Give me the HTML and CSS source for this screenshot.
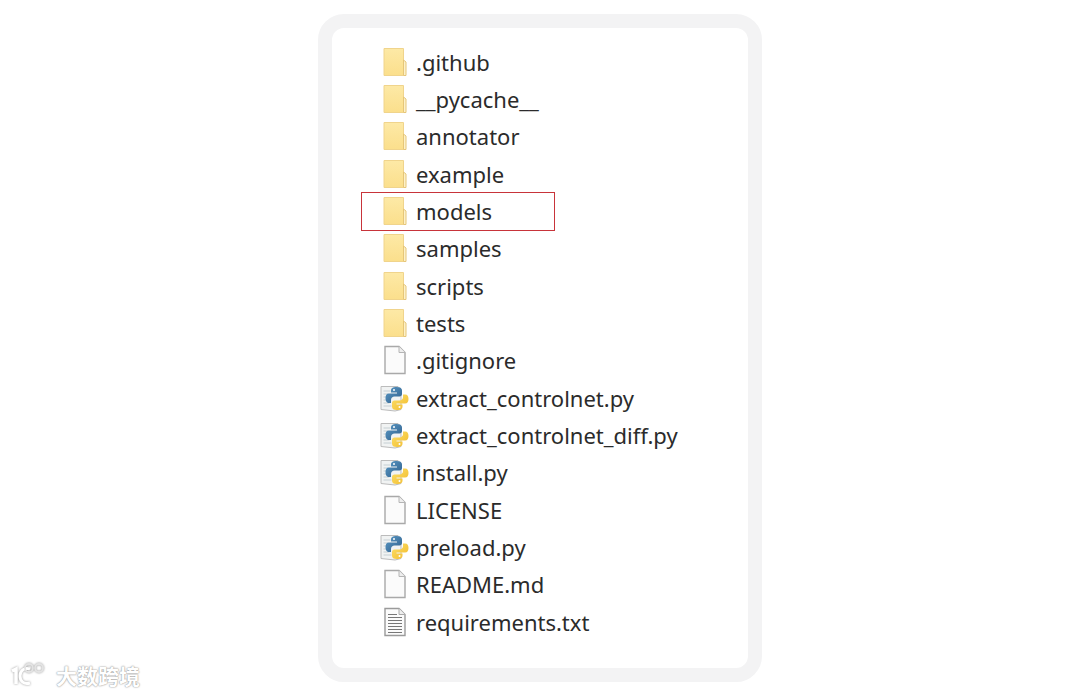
FILE: index.html
```html
<!DOCTYPE html>
<html lang="en">
<head>
<meta charset="utf-8">
<title>Files</title>
<link rel="stylesheet" href="styles.css">
</head>
<body>
<svg class="defs" width="0" height="0" aria-hidden="true">
  <defs>
    <linearGradient id="fg" x1="0" y1="0" x2="0" y2="1"><stop offset="0" stop-color="#fde9a6"/><stop offset="1" stop-color="#fbdf8c"/></linearGradient>
    <linearGradient id="pb" x1="0" y1="0" x2="1" y2="1"><stop offset="0" stop-color="#5b9ac6"/><stop offset="1" stop-color="#2f5f8c"/></linearGradient>
    <linearGradient id="py" x1="0" y1="0" x2="1" y2="1"><stop offset="0" stop-color="#fbe06a"/><stop offset="1" stop-color="#f3bb2c"/></linearGradient>
    <symbol id="folder" viewBox="0 0 24 30">
      <path d="M1 1.5h19.5v27H1z" fill="url(#fg)" stroke="#f0d48c"/>
      <path d="M20.5 13l2.5 2v13.500h-2.500z" fill="#fdf1c8" stroke="#e6c679"/>
    </symbol>
    <symbol id="file" viewBox="0 0 24 30">
      <path d="M2 1.500h14l6 6v21H2z" fill="#fbfbfb" stroke="#a9a9a9" stroke-width="1.400"/>
      <path d="M16 1.500v6h6" fill="#eee" stroke="#b5b5b5"/>
    </symbol>
    <symbol id="text" viewBox="0 0 24 30">
      <path d="M2 1.500h14l6 6v21H2z" fill="#fbfbfb" stroke="#9a9a9a" stroke-width="1.400"/>
      <path d="M16 1.500v6h6" fill="#eee" stroke="#aaa"/>
      <path d="M5 7.500h9M5 10.500h14M5 13.500h14M5 16.500h14M5 19.500h14M5 22.500h14M5 25.500h14" stroke="#777" stroke-width="1.100"/>
    </symbol>
    <symbol id="python" viewBox="0 0 30 30">
      <path d="M1 3.500h17l3 3v20l-6 1.500-14-1.500z" fill="#f1f3f3" stroke="#bcbcbc"/>
      <path d="M3.500 8h7M3.500 11h5M3.500 14h5M3.500 17h5M3.500 20h6M3.500 23h8" stroke="#c6cfd3" stroke-width="1.200"/>
      <path d="M16.500 4c-4 0-5.500 1.500-5.500 3.500v2h6v1H9c-2.500 0-3.500 2-3.500 4.500s1 5 3.300 5h2.200v-3c0-2 1.500-3.500 3.500-3.500h5c1.500 0 2.500-1 2.500-2.500V7.500C22 5 20 4 16.500 4z" fill="url(#pb)"/>
      <circle cx="14" cy="7" r="1" fill="#fff"/>
      <path d="M17 27c4 0 5.500-1.500 5.500-3.500v-2h-6v-1H25c2.500 0 3.500-2 3.500-4.500s-1-4.500-3.300-4.500H23v2.500c0 2-1.500 3.500-3.500 3.500h-5C13 17.500 12 18.500 12 20v3.500c0 2.500 1.500 3.500 5 3.500z" fill="url(#py)"/>
      <circle cx="19.500" cy="24" r="1" fill="#fff"/>
    </symbol>
  </defs>
</svg>

<main class="card">
  <ul class="list">
    <li class="row"><svg class="icon"><use href="#folder"/></svg><span>.github</span></li>
    <li class="row"><svg class="icon"><use href="#folder"/></svg><span>__pycache__</span></li>
    <li class="row"><svg class="icon"><use href="#folder"/></svg><span>annotator</span></li>
    <li class="row"><svg class="icon"><use href="#folder"/></svg><span>example</span></li>
    <li class="row highlighted"><svg class="icon"><use href="#folder"/></svg><span>models</span></li>
    <li class="row"><svg class="icon"><use href="#folder"/></svg><span>samples</span></li>
    <li class="row"><svg class="icon"><use href="#folder"/></svg><span>scripts</span></li>
    <li class="row"><svg class="icon"><use href="#folder"/></svg><span>tests</span></li>
    <li class="row"><svg class="icon"><use href="#file"/></svg><span>.gitignore</span></li>
    <li class="row"><svg class="icon"><use href="#python"/></svg><span>extract_controlnet.py</span></li>
    <li class="row"><svg class="icon"><use href="#python"/></svg><span>extract_controlnet_diff.py</span></li>
    <li class="row"><svg class="icon"><use href="#python"/></svg><span>install.py</span></li>
    <li class="row"><svg class="icon"><use href="#file"/></svg><span>LICENSE</span></li>
    <li class="row"><svg class="icon"><use href="#python"/></svg><span>preload.py</span></li>
    <li class="row"><svg class="icon"><use href="#file"/></svg><span>README.md</span></li>
    <li class="row"><svg class="icon"><use href="#text"/></svg><span>requirements.txt</span></li>
  </ul>
</main>

<div class="watermark">
  <svg class="wm-logo" viewBox="0 0 44 26" aria-hidden="true">
    <path d="M4 9l4-2v15" fill="none" stroke="#fff" stroke-width="3.500"/>
    <path d="M22 7c-6-2-10 2-10 7s4 9 10 7" fill="none" stroke="#fff" stroke-width="3"/>
    <circle cx="21" cy="6" r="4" fill="none" stroke="#e4e4e4" stroke-width="1.800"/>
    <circle cx="31" cy="6" r="4" fill="none" stroke="#e4e4e4" stroke-width="1.800"/>
  </svg>
  <span>大数跨境</span>
</div>
</body>
</html>
```
FILE: styles.css
```css
* { box-sizing: border-box; }
html, body { margin: 0; padding: 0; }
body {
  width: 1080px;
  height: 696px;
  background: #fff;
  position: relative;
  overflow: hidden;
  font-family: "Noto Sans", "Open Sans", sans-serif;
  color: #2b2b2b;
}
.defs { position: absolute; }
.card {
  width: 444px;
  height: 668px;
  margin: 14px auto 0;
  border: 14px solid #f3f3f4;
  border-radius: 26px;
  background: #fff;
  padding-top: 15px;
}
.list {
  list-style: none;
  margin: 0;
  padding: 0 0 0 49px;
}
.row {
  position: relative;
  display: flex;
  align-items: center;
  height: 37.33px;
  font-size: 22px;
  line-height: 30px;
  white-space: nowrap;
}
.icon {
  width: 30px;
  height: 30px;
  margin-left: -1px;
  margin-right: 6px;
  flex: none;
}
.highlighted::after {
  content: "";
  position: absolute;
  left: -20px;
  top: 0;
  width: 192px;
  height: 37px;
  border: 1.500px solid #c8343a;
}
.watermark {
  position: absolute;
  left: 8px;
  top: 661px;
  display: flex;
  align-items: center;
  gap: 4px;
  color: #fff;
  font-family: "Noto Sans CJK SC", sans-serif;
  font-size: 21px;
  font-weight: 700;
  line-height: 28px;
  text-shadow: 0 0 2px #9a9a9a, 0 0 1px #9a9a9a;
}
.wm-logo {
  width: 44px;
  height: 26px;
  filter: drop-shadow(0 0 1px #999);
}
```
